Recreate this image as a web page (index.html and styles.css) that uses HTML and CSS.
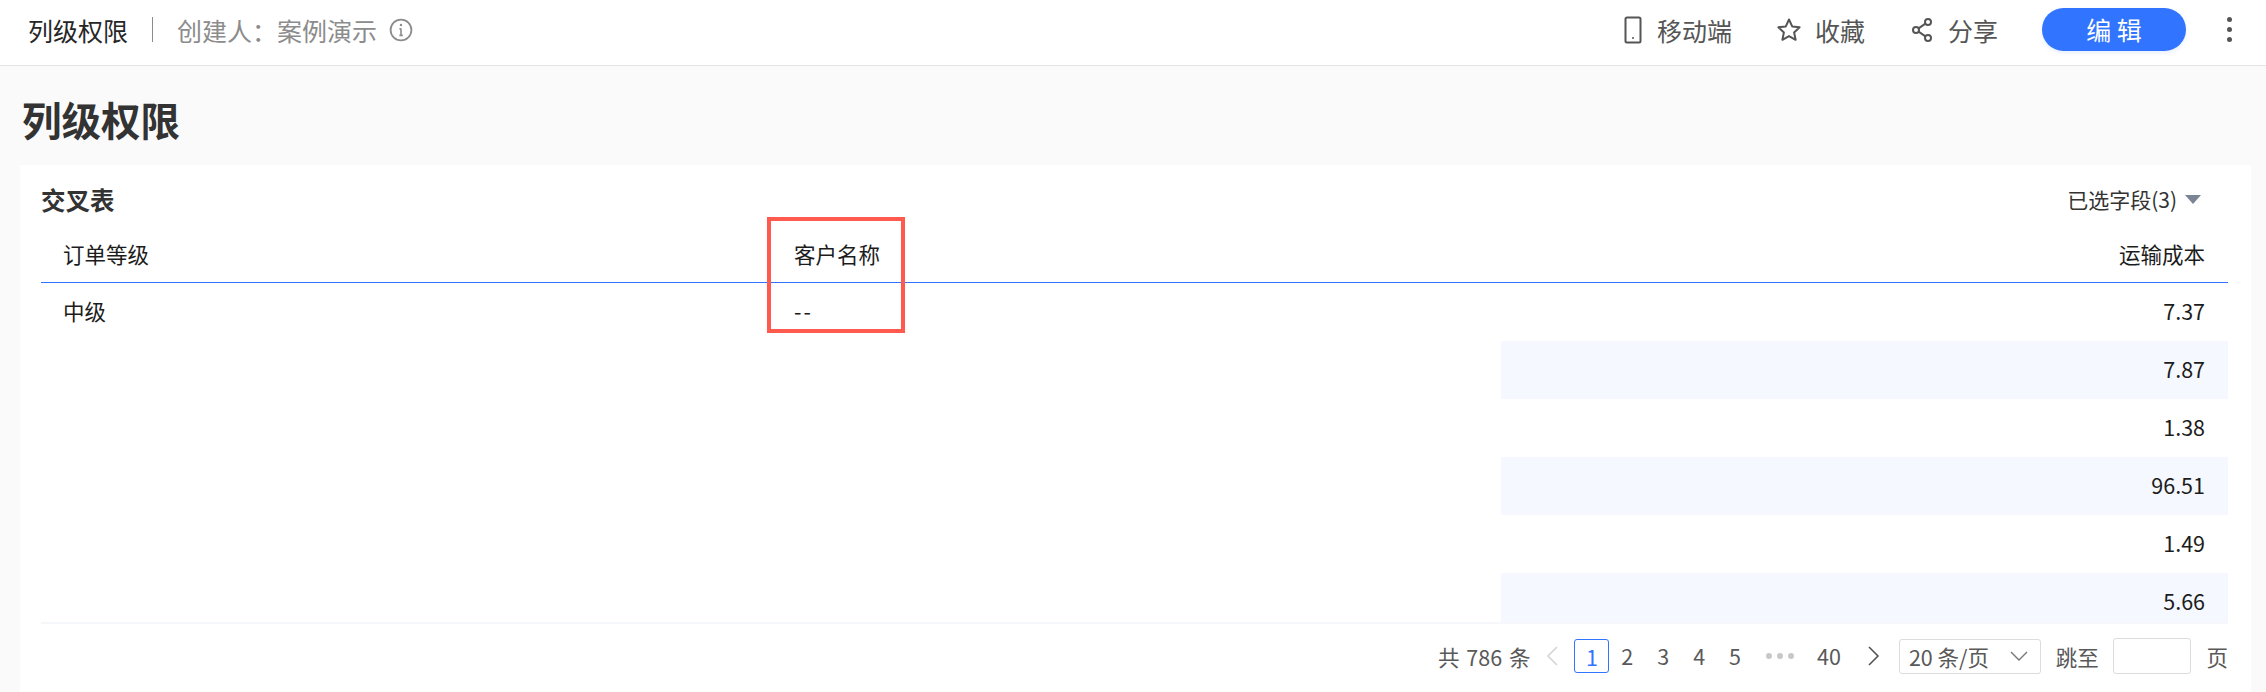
FILE: index.html
```html
<!DOCTYPE html>
<html lang="zh-CN">
  <head>
    <meta charset="UTF-8" />
    <title>列级权限</title>
    <link rel="stylesheet" href="styles.css">
  </head>
  <body>
    <header class="topbar">
      <div class="topbar-left">
        <span class="doc-name">列级权限</span>
        <span class="doc-sep"></span>
        <span class="doc-owner">创建人：案例演示</span>
        <svg class="info-icon" width="24" height="24" viewBox="0 0 24 24" fill="none" stroke="#8c8c8c" stroke-width="1.8">
          <circle cx="12" cy="12" r="10.4" />
          <path d="M12 10.5v7M10.4 10.8H12M10.4 17.4h3.4" stroke-width="1.6" />
          <circle cx="12" cy="7" r="1.2" fill="#8c8c8c" stroke="none" />
        </svg>
      </div>
      <div class="topbar-right">
        <a class="action action-mobile">
          <svg width="18" height="28" viewBox="0 0 18 28" fill="none" stroke="#555" stroke-width="2">
            <rect x="1.5" y="1.5" width="15" height="25" rx="1.5" />
            <circle cx="9" cy="22" r="1" fill="#555" stroke="none" />
          </svg>
          移动端
        </a>
        <a class="action action-star">
          <svg width="26" height="26" viewBox="0 0 26 26" fill="none" stroke="#555" stroke-width="2" stroke-linejoin="round">
            <path d="M13 2.5l3.2 6.9 7.4.9-5.5 5.1 1.5 7.4L13 19.1l-6.6 3.7 1.5-7.4-5.5-5.1 7.4-.9z" />
          </svg>
          收藏
        </a>
        <a class="action action-share">
          <svg width="22" height="26" viewBox="0 0 22 26" fill="none" stroke="#555" stroke-width="2">
            <circle cx="17" cy="5" r="3" />
            <circle cx="5" cy="13" r="3" />
            <circle cx="17" cy="21" r="3" />
            <path d="M7.6 11.3l6.8-4.6M7.6 14.7l6.8 4.6" />
          </svg>
          分享
        </a>
        <button class="edit-btn">编 辑</button>
        <span class="more-dots"><i></i><i></i><i></i></span>
      </div>
    </header>

    <main class="page">
      <h1 class="page-title">列级权限</h1>
      <section class="card">
        <div class="card-head">
          <h2>交叉表</h2>
          <div class="field-pick">已选字段(3)<span class="caret"></span></div>
        </div>
        <div class="table">
          <div class="cell head">订单等级</div>
          <div class="cell head">客户名称</div>
          <div class="cell head num">运输成本</div>

          <div class="cell">中级</div>
          <div class="cell dash">--</div>
          <div class="cell num">7.37</div>

          <div class="cell"></div>
          <div class="cell"></div>
          <div class="cell num alt">7.87</div>

          <div class="cell"></div>
          <div class="cell"></div>
          <div class="cell num">1.38</div>

          <div class="cell"></div>
          <div class="cell"></div>
          <div class="cell num alt">96.51</div>

          <div class="cell"></div>
          <div class="cell"></div>
          <div class="cell num">1.49</div>

          <div class="cell"></div>
          <div class="cell"></div>
          <div class="cell num alt">5.66</div>
        </div>
        <div class="pager">
          <span class="total">共 786 条</span>
          <svg class="arrow" width="14" height="22" viewBox="0 0 14 22" fill="none" stroke="#d4d4d4" stroke-width="1.6"><path d="M12 2L3 11l9 9" /></svg>
          <span class="pg current">1</span>
          <span class="pg">2</span>
          <span class="pg">3</span>
          <span class="pg">4</span>
          <span class="pg">5</span>
          <span class="pg-more"><i></i><i></i><i></i></span>
          <span class="pg pg-last">40</span>
          <svg class="arrow arrow-next" width="14" height="22" viewBox="0 0 14 22" fill="none" stroke="#555" stroke-width="1.6"><path d="M2 2l9 9-9 9" /></svg>
          <div class="size-select">20 条/页
            <svg width="18" height="10" viewBox="0 0 18 10" fill="none" stroke="#777" stroke-width="1.4"><path d="M1 1l8 8 8-8" /></svg>
          </div>
          <span class="jump">跳至</span>
          <span class="jump-input"></span>
          <span class="jump-unit">页</span>
        </div>
        <div class="mark"></div>
      </section>
    </main>
  </body>
</html>
```

FILE: styles.css
```css
* {
  box-sizing: border-box;
}

body {
  margin: 0;
  height: 692px;
  overflow: hidden;
  background-color: #fafafa;
  font-family: "Noto Sans CJK SC", "Liberation Sans", sans-serif;
  color: #333;
}

.topbar {
  height: 66px;
  display: flex;
  justify-content: space-between;
  align-items: center;
  padding: 0 34px 6px 28px;
  background: #fff;
  border-bottom: 1px solid #e3e3e3;
}

.topbar-left,
.topbar-right {
  display: flex;
  align-items: center;
}

.doc-name {
  font-size: 25px;
  color: #262626;
}

.doc-sep {
  width: 1px;
  height: 25px;
  margin: 0 25px 0 24px;
  background: #8c8c8c;
}

.doc-owner {
  margin-left: -1px;
  font-size: 25px;
  color: #8c8c8c;
}

.info-icon {
  margin-left: 12px;
}

.action {
  display: flex;
  align-items: center;
  font-size: 25px;
  color: #555;
}

.action-mobile {
  gap: 15px;
}

.action-star {
  gap: 13px;
  margin-left: 44px;
}

.action-share {
  gap: 15px;
  margin-left: 46px;
}

.edit-btn {
  width: 144px;
  height: 43px;
  margin-left: 44px;
  padding: 0;
  border: none;
  border-radius: 22px;
  background-color: #3074ff;
  box-shadow: 0 2px 4px rgba(48, 116, 255, 0.12);
  color: #fff;
  font-family: inherit;
  font-size: 25px;
  line-height: 43px;
}

.more-dots {
  display: flex;
  flex-direction: column;
  gap: 5px;
  margin-left: 41px;
}

.more-dots i {
  width: 5px;
  height: 5px;
  border-radius: 50%;
  background: #555;
}

.page {
  padding: 0 15px 0 20px;
}

.page-title {
  height: 99px;
  margin: 0;
  padding: 26px 0 0 2px;
  font-size: 39.5px;
  line-height: 53px;
  font-weight: 700;
  color: #333;
}

.card {
  position: relative;
  height: 527px;
  padding: 0 23px 0 21px;
  background: #fff;
}

.card-head {
  height: 62px;
  display: flex;
  justify-content: space-between;
  align-items: center;
  padding: 6px 27px 0 0;
}

.card-head h2 {
  margin: 0;
  font-size: 24.5px;
  font-weight: 700;
  color: #333;
}

.field-pick {
  display: flex;
  align-items: center;
  font-size: 21px;
  color: #333;
}

.caret {
  width: 0;
  height: 0;
  margin-left: 8px;
  border-left: 8px solid transparent;
  border-right: 8px solid transparent;
  border-top: 9px solid #7b8494;
}

.table {
  display: grid;
  grid-template-columns: 730px 730px 727px;
  grid-template-rows: 56px repeat(6, 58px);
  height: 397px;
  overflow: hidden;
  border-bottom: 2px solid #f5f7fa;
}

.cell {
  display: flex;
  align-items: center;
  padding: 0 23px 3px;
  font-size: 21.5px;
  color: #1c1c1c;
}

.cell:nth-child(3n + 1) {
  padding-left: 22px;
}

.head {
  border-bottom: 1px solid #3074ff;
  padding-bottom: 2px;
}

.num {
  justify-content: flex-end;
}

.dash {
  letter-spacing: 2px;
}

.alt {
  background-color: #f5f8fe;
}

.pager {
  display: flex;
  align-items: center;
  height: 64px;
  margin-left: 1397px;
  font-size: 21.5px;
  color: #595959;
  white-space: nowrap;
}

.total {
  word-spacing: 2px;
}

.pg {
  width: 36px;
  text-align: center;
  line-height: 34px;
}

.current {
  height: 34px;
  width: 35px;
  border: 1px solid #3074ff;
  border-radius: 3px;
  color: #3074ff;
}

.arrow {
  margin: 0 15px 0 15px;
}

.arrow-next {
  margin: 0 15px 0 16px;
}

.pg-more {
  display: flex;
  gap: 5px;
  margin: 0 13px 0 13px;
}

.pg-more i {
  width: 6px;
  height: 6px;
  border-radius: 50%;
  background: #c8c8c8;
}

.pg-last {
  width: 44px;
}

.size-select {
  width: 142px;
  height: 35px;
  display: flex;
  align-items: center;
  justify-content: space-between;
  padding: 0 12px 0 9px;
  margin-left: 3px;
  border: 1px solid #dcdcdc;
  border-radius: 3px;
}

.jump {
  margin-left: 15px;
}

.jump-input {
  width: 79px;
  height: 36px;
  margin-left: 14px;
  border: 1px solid #dcdcdc;
  border-radius: 3px;
  background: #fff;
}

.jump-unit {
  margin-left: 15px;
}

/* annotation drawn over the table */
.mark {
  position: absolute;
  left: 747px;
  top: 52px;
  width: 138px;
  height: 116px;
  border: 4px solid #ff5a4d;
}
```
